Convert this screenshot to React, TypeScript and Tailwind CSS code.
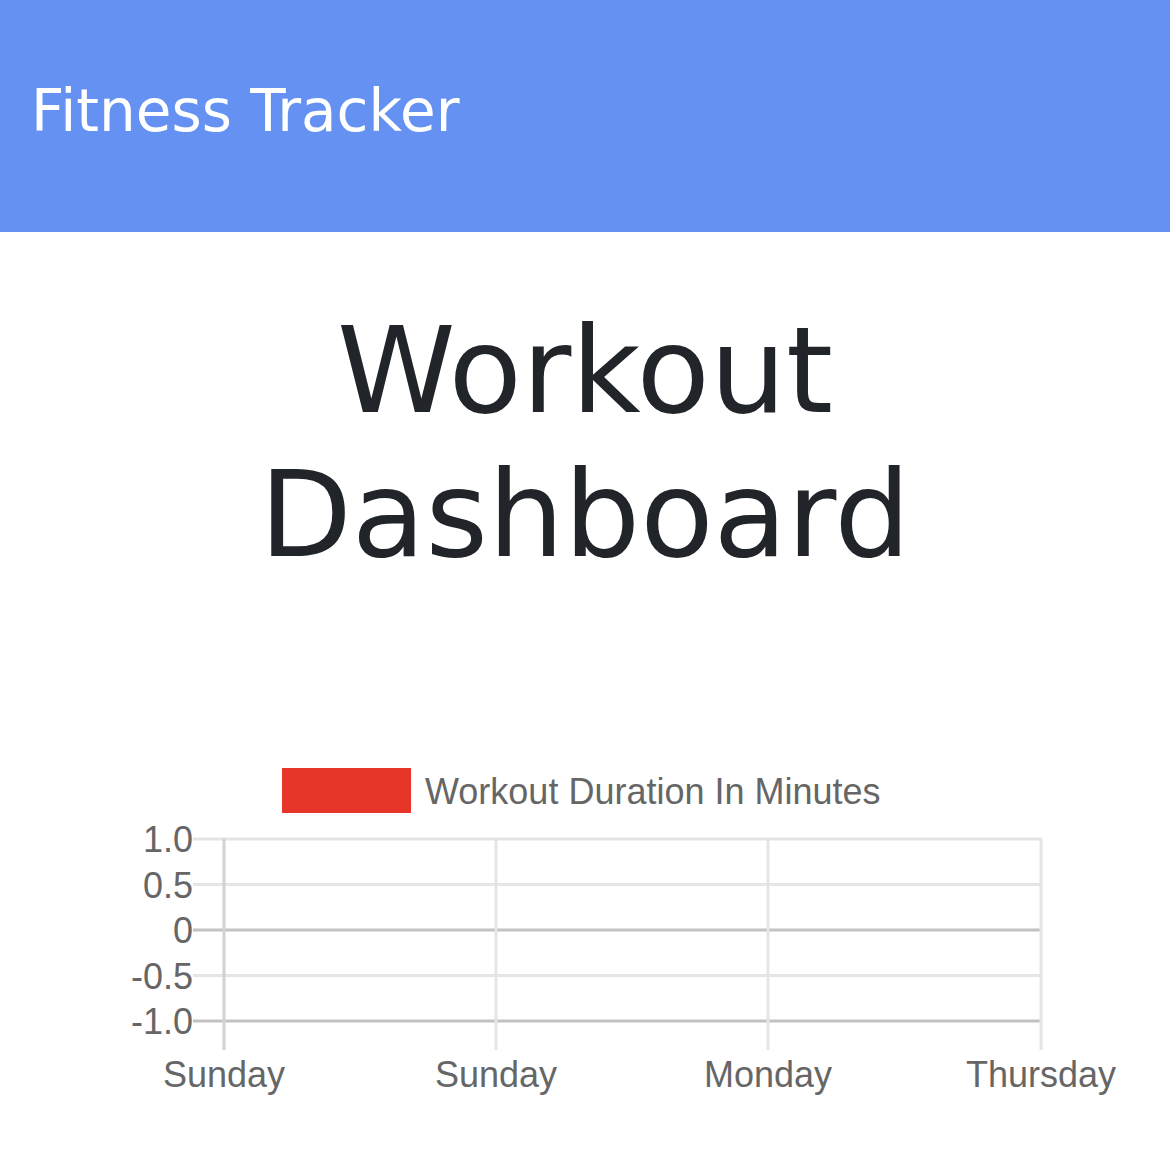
import React from "react";

const yTicks = [
  { label: "1.0", y: 89 },
  { label: "0.5", y: 134.5 },
  { label: "0", y: 180 },
  { label: "-0.5", y: 225.5 },
  { label: "-1.0", y: 271 },
];
const xTicks = [
  { label: "Sunday", x: 224 },
  { label: "Sunday", x: 496 },
  { label: "Monday", x: 768 },
  { label: "Thursday", x: 1041 },
];

function Chart() {
  return (
    <svg width={1170} height={370} viewBox="0 0 1170 370" className="block">
      <rect x={282} y={18} width={129} height={45} fill="#e8352a" />
      <text
        x={425}
        y={54}
        fontSize={36}
        fill="#666666"
        fontFamily="'Liberation Sans', Arial, sans-serif"
      >
        Workout Duration In Minutes
      </text>
      {yTicks.map((t) => (
        <line
          key={"h" + t.label}
          x1={193}
          x2={1042}
          y1={t.y}
          y2={t.y}
          stroke={t.label === "0" || t.label === "-1.0" ? "#c2c2c2" : "#e5e5e5"}
          strokeWidth={3}
        />
      ))}
      {xTicks.map((t, i) => (
        <line
          key={"v" + i}
          x1={t.x}
          x2={t.x}
          y1={88}
          y2={300}
          stroke={i === 0 ? "#d2d2d2" : "#e5e5e5"}
          strokeWidth={3}
        />
      ))}
      {yTicks.map((t) => (
        <text
          key={"yl" + t.label}
          x={193}
          y={t.y + 13}
          fontSize={36}
          textAnchor="end"
          fill="#666666"
          fontFamily="'Liberation Sans', Arial, sans-serif"
        >
          {t.label}
        </text>
      ))}
      {xTicks.map((t, i) => (
        <text
          key={"xl" + i}
          x={t.x}
          y={337}
          fontSize={36}
          textAnchor="middle"
          fill="#666666"
          fontFamily="'Liberation Sans', Arial, sans-serif"
        >
          {t.label}
        </text>
      ))}
    </svg>
  );
}

export default function App() {
  return (
    <div className="w-[1170px] min-h-[1170px] bg-white font-['DejaVu_Sans',sans-serif]">
      <header className="h-[232px] bg-[#6592f2] flex items-center px-[31px]">
        <span className="text-white text-[58px] leading-none -mt-[10px]">Fitness Tracker</span>
      </header>
      <h1 className="mt-[67px] text-center text-[120px] leading-[144px] text-[#212529] font-normal">
        Workout
        <br />
        Dashboard
      </h1>
      <div className="mt-[163px]">
        <Chart />
      </div>
    </div>
  );
}
